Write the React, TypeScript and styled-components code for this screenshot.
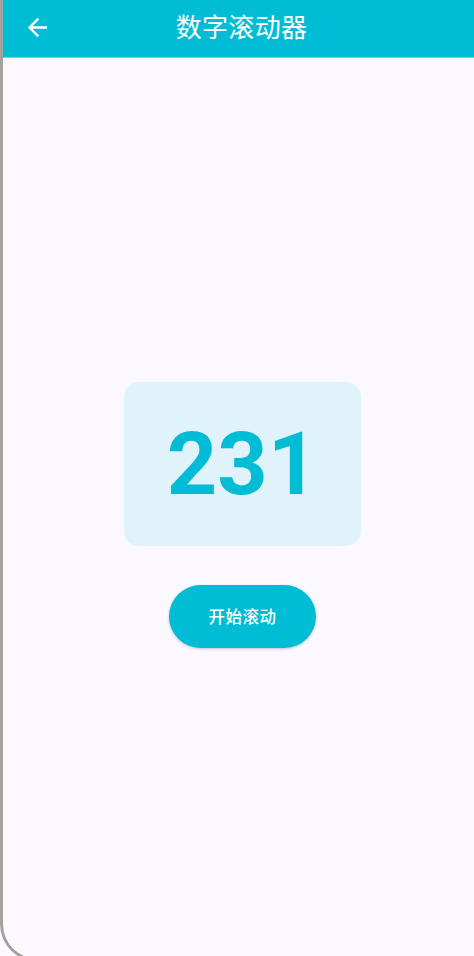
import styled, { createGlobalStyle } from 'styled-components';

const GlobalStyle = createGlobalStyle`
  html, body {
    margin: 0;
    padding: 0;
    background: #fbf8ff;
    overflow: hidden;
  }
  * {
    box-sizing: border-box;
  }
`;

const CJK = `Roboto, "Noto Sans CJK SC", "Noto Sans", sans-serif`;

const Device = styled.div`
  height: 962px;
  display: flex;
  flex-direction: column;
  background: #fbf8ff;
  border-left: 3px solid #a3a39e;
  border-bottom: 3px solid #a3a39e;
  border-bottom-left-radius: 38px;
  overflow: hidden;
  font-family: ${CJK};
`;

const AppBar = styled.header`
  height: 58px;
  flex: none;
  display: grid;
  grid-template-columns: 1fr auto 1fr;
  align-items: center;
  background: #00bcd4;
  border-bottom: 1px solid #6fd6e6;
  padding-bottom: 11px;
`;

const BackButton = styled.button`
  justify-self: start;
  width: 29px;
  height: 29px;
  margin-left: 20px;
  margin-top: 9px;
  padding: 0;
  border: none;
  background: transparent;
  color: #ffffff;
  display: flex;
  align-items: center;
  justify-content: center;
  cursor: pointer;

  svg {
    width: 29px;
    height: 29px;
    display: block;
  }
`;

const Title = styled.h1`
  margin: 9px 0 0 6px;
  font-size: 26px;
  font-weight: 400;
  color: #ffffff;
  letter-spacing: 0.3px;
  line-height: 1;
`;

const Body = styled.main`
  flex: 1;
  display: flex;
  flex-direction: column;
  align-items: center;
  justify-content: center;
  gap: 39px;
  padding-top: 12px;
  padding-left: 8px;
`;

const Counter = styled.div`
  width: 237px;
  height: 164px;
  border-radius: 15px;
  background: #e0f3fa;
  display: flex;
  align-items: center;
  justify-content: center;
`;

const Digits = styled.span`
  font-family: Roboto, "Liberation Sans", sans-serif;
  font-size: 88px;
  font-weight: 700;
  color: #00bcd4;
  line-height: 1;
  letter-spacing: 0;
  font-variant-numeric: tabular-nums;
  margin-top: 0;
`;

const StartButton = styled.button`
  width: 147px;
  height: 63px;
  border: none;
  border-radius: 32px;
  background: #00bcd4;
  color: #ffffff;
  font-family: ${CJK};
  font-size: 16.5px;
  font-weight: 500;
  letter-spacing: 0.5px;
  box-shadow: 0 1px 3px rgba(0, 0, 0, 0.22);
  cursor: pointer;
`;

const ArrowBack = () => (
  <svg viewBox="0 0 24 24" fill="currentColor" aria-hidden="true">
    <path d="M20 11H7.83l5.59-5.59L12 4l-8 8 8 8 1.41-1.41L7.83 13H20v-2z" />
  </svg>
);

export default function App() {
  const value = 231;

  return (
    <>
      <GlobalStyle />
      <Device>
        <AppBar>
          <BackButton aria-label="返回">
            <ArrowBack />
          </BackButton>
          <Title>数字滚动器</Title>
          <span />
        </AppBar>
        <Body>
          <Counter>
            <Digits>{value}</Digits>
          </Counter>
          <StartButton>开始滚动</StartButton>
        </Body>
      </Device>
    </>
  );
}
